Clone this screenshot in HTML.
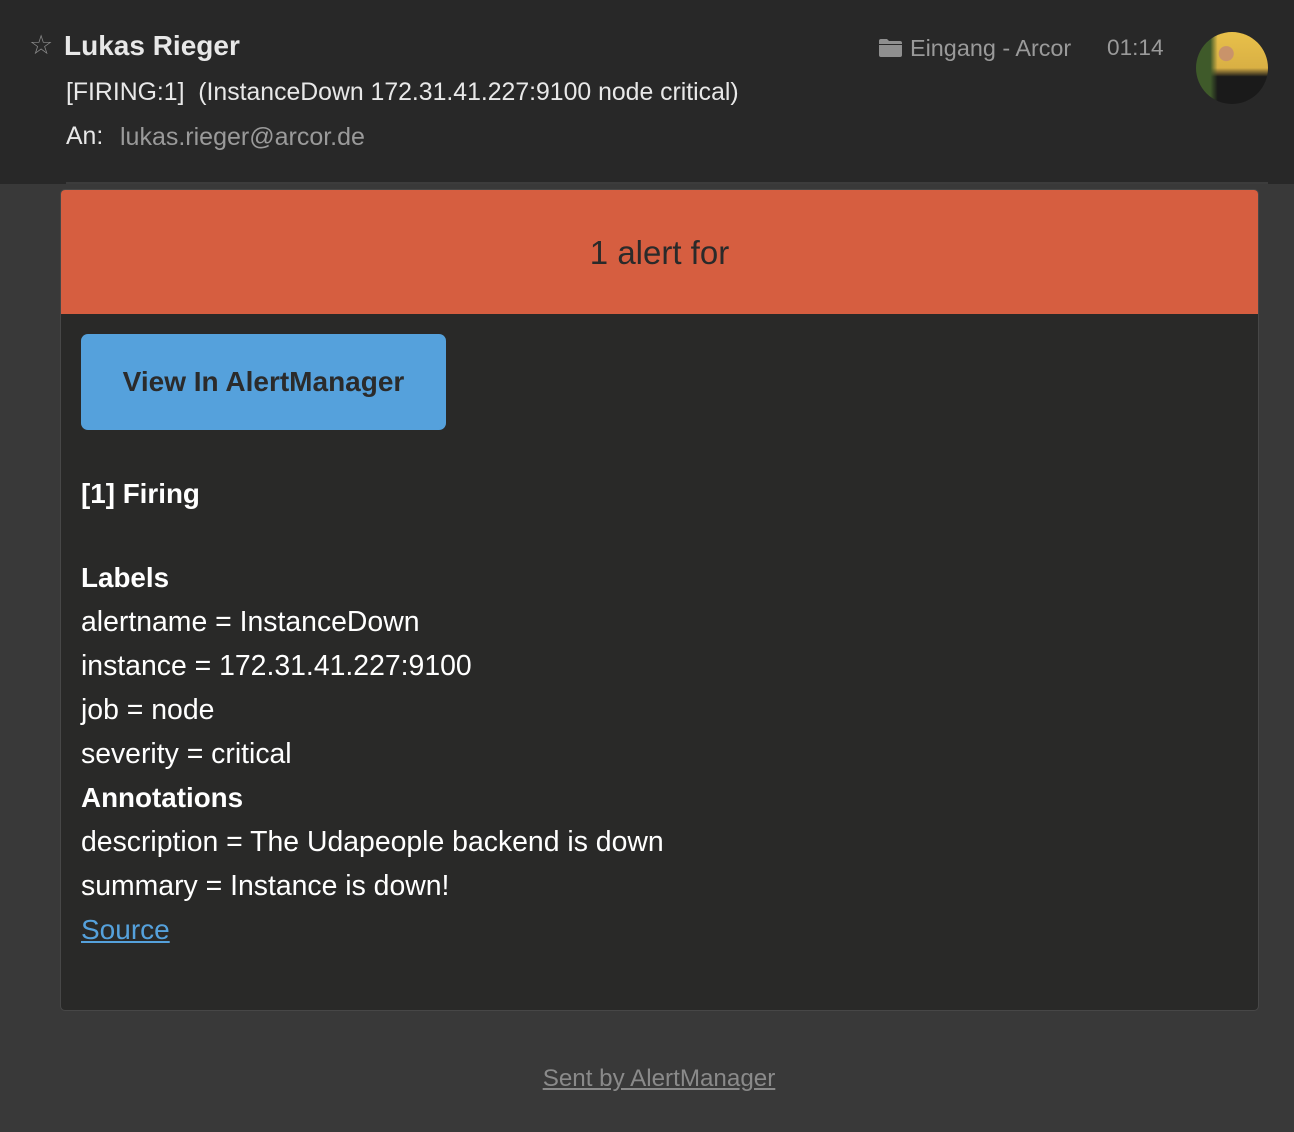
<!DOCTYPE html>
<html><head><meta charset="utf-8"><style>
*{margin:0;padding:0;box-sizing:border-box}
body{width:1294px;height:1132px;background:#393939;font-family:"Liberation Sans",Arial,sans-serif;position:relative;overflow:hidden}
.hdr{position:absolute;left:0;top:0;width:1294px;height:184px;background:#282828}
.line{position:absolute;left:66px;top:182px;width:1202px;height:2px;background:#3c3c3c}
.a{position:absolute;white-space:nowrap;line-height:1}
.card{position:absolute;left:60px;top:189px;width:1199px;height:822px;background:#292928;border:1px solid #474747;border-radius:5px;overflow:hidden}
.red{position:absolute;left:0;top:0;width:100%;height:124px;background:#d65e40;color:#2a2a2a;font-size:33px;text-align:center;line-height:126px}
.btn{position:absolute;left:20px;top:144px;width:365px;height:96px;background:#55a1dc;border-radius:7px;color:#2b2b2b;font-weight:bold;font-size:28px;text-align:center;line-height:96px}
.t{position:absolute;left:20px;font-size:28.4px;color:#fff;line-height:1;white-space:nowrap}
.b{font-weight:bold;font-size:27.8px}
</style></head><body>
<div class="hdr"></div>
<div class="line"></div>
<div class="a" style="left:29px;top:32px;font-size:27px;color:#8a8a8a">☆</div>
<div class="a" style="left:64px;top:32px;font-size:28px;font-weight:bold;color:#e8e8e8">Lukas Rieger</div>
<div class="a" style="left:66px;top:81px;font-size:24.8px;color:#e8e8e8">[FIRING:1]&nbsp; (InstanceDown 172.31.41.227:9100 node critical)</div>
<div class="a" style="left:66px;top:125px;font-size:24.8px;color:#e8e8e8">An:</div>
<div class="a" style="left:120px;top:125px;font-size:25px;color:#9a9a9a">lukas.rieger@arcor.de</div>
<svg class="a" style="left:878px;top:38px" width="25" height="20" viewBox="0 0 25 20"><path d="M1 3 Q1 1 3 1 H9 L11 3 H22 Q24 3 24 5 V17 Q24 19 22 19 H3 Q1 19 1 17 Z" fill="#8f8f8f"/><rect x="1" y="6" width="23" height="1" fill="#282828"/></svg>
<div class="a" style="left:910px;top:37px;font-size:23.4px;color:#9a9a9a">Eingang - Arcor</div>
<div class="a" style="left:1107px;top:37px;font-size:22.6px;color:#9a9a9a">01:14</div>
<div class="a" style="left:1196px;top:32px;width:72px;height:72px;border-radius:50%;background:radial-gradient(circle at 42% 30%,#c9936a 0 11%,transparent 12%),linear-gradient(90deg,#3f5a2a 0%,#3f5a2a 20%,transparent 30%),linear-gradient(180deg,#e8c04a 0%,#d9b044 50%,#1a1a1a 62%,#1a1a1a 100%);overflow:hidden"></div>
<div class="card">
<div class="red">1 alert for</div>
<div class="btn">View In AlertManager</div>
<div class="t b" style="top:290px">[1] Firing</div>
<div class="t b" style="top:374px">Labels</div>
<div class="t" style="top:418px">alertname = InstanceDown</div>
<div class="t" style="top:462px">instance = 172.31.41.227:9100</div>
<div class="t" style="top:506px">job = node</div>
<div class="t" style="top:550px">severity = critical</div>
<div class="t b" style="top:594px">Annotations</div>
<div class="t" style="top:638px">description = The Udapeople backend is down</div>
<div class="t" style="top:682px">summary = Instance is down!</div>
<div class="t" style="top:726px;color:#55a1dc;text-decoration:underline;font-size:28px">Source</div>
</div>
<div class="a" style="left:0;width:1318px;text-align:center;top:1067px;font-size:24.2px;color:#8a8a8a;text-decoration:underline">Sent by AlertManager</div>
</body></html>
